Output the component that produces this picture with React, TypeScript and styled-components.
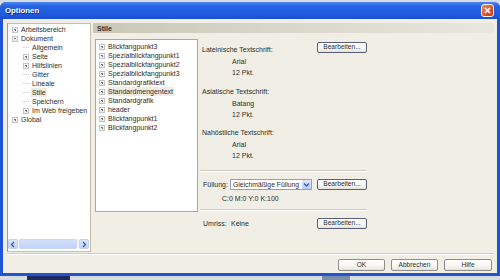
import React from "react";
import styled, { createGlobalStyle, css } from "styled-components";

const GlobalStyle = createGlobalStyle`
  html, body { margin: 0; padding: 0; }
  body {
    background: #dcdfe6;
    font-family: "Liberation Sans", Arial, sans-serif;
    font-size: 7px;
    color: #2e2e2e;
  }
`;

const Desktop = styled.div`
  width: 500px;
  height: 280px;
  display: flex;
  flex-direction: column;
  padding-top: 2px;
  box-sizing: border-box;
  background: #d8dbe2;
  overflow: hidden;
`;

const Window = styled.div`
  height: 274px;
  flex: none;
  display: flex;
  flex-direction: column;
  background: #1d55d6;
  border-radius: 6px 6px 0 0;
`;

const TitleBar = styled.div`
  height: 17px;
  flex: none;
  display: flex;
  align-items: center;
  justify-content: space-between;
  padding: 0 6px 0 5px;
  border-radius: 6px 6px 0 0;
  background: linear-gradient(#4c86f2 0%, #2562e4 25%, #1f5bdf 75%, #1a4fc9 100%);
`;

const TitleText = styled.span`
  color: #fff;
  font-weight: bold;
  font-size: 7.8px;
  text-shadow: 1px 1px 0 #10307e;
`;

const CloseButton = styled.div`
  width: 13px;
  height: 13px;
  box-sizing: border-box;
  border: 1px solid #f4f4f4;
  border-radius: 3px;
  background: linear-gradient(135deg, #f08a62 0%, #e0532a 55%, #c63d16 100%);
  display: flex;
  align-items: center;
  justify-content: center;
`;

const Body = styled.div`
  flex: 1;
  margin: 0 3px 3px;
  background: #f0eee5;
  display: flex;
  flex-direction: column;
  padding: 4px 3px 0 4px;
`;

const Main = styled.div`
  height: 229px;
  flex: none;
  display: flex;
  gap: 2px;
`;

const TreePanel = styled.div`
  width: 84px;
  flex: none;
  box-sizing: border-box;
  background: #fff;
  border: 1px solid #c4bfac;
  border-left-color: #a99a78;
  display: flex;
  flex-direction: column;
`;

const TreeList = styled.div`
  flex: 1;
  padding-top: 1px;
`;

const TreeRow = styled.div<{ $level: number }>`
  height: 9px;
  display: flex;
  align-items: center;
  gap: 2px;
  padding-left: ${(p) => 4 + p.$level * 11}px;
  white-space: nowrap;
`;

const RowLabel = styled.span<{ $selected?: boolean }>`
  line-height: 9px;
  padding: 0 1px;
  ${(p) =>
    p.$selected &&
    css`
      background: #eeece3;
    `}
`;

const Expander = styled.span<{ $open?: boolean }>`
  position: relative;
  width: 6px;
  height: 6px;
  flex: none;
  box-sizing: border-box;
  border: 1px solid #c2c6c8;
  background: linear-gradient(#ffffff, #ebe9e1);
  &::before {
    content: "";
    position: absolute;
    left: 1px;
    top: 1.5px;
    width: 2px;
    height: 1px;
    background: #6a6a6a;
  }
  &::after {
    content: "";
    position: absolute;
    left: 1.5px;
    top: 1px;
    width: 1px;
    height: 2px;
    background: #6a6a6a;
    display: ${(p) => (p.$open ? "none" : "block")};
  }
`;

const LeafStub = styled.span`
  width: 6px;
  height: 0;
  flex: none;
  border-top: 1px dotted #d0d0d0;
`;

const HScroll = styled.div`
  height: 10px;
  flex: none;
  margin: 0 1px 2px 0;
  display: flex;
  gap: 1px;
  background: #f6f6f2;
`;

const ScrollBtn = styled.div`
  width: 10px;
  flex: none;
  box-sizing: border-box;
  border: 1px solid #c3d1f1;
  border-radius: 2px;
  background: linear-gradient(#dbe5fb, #c1d2f6);
  display: flex;
  align-items: center;
  justify-content: center;
`;

const ScrollThumb = styled.div`
  flex: 1;
  box-sizing: border-box;
  border: 1px solid #c9d7f6;
  border-radius: 2px;
  background: linear-gradient(#d4e0fa, #c2d3f7);
  margin-right: 1px;
`;

const RightPane = styled.div`
  flex: 1;
  display: flex;
  flex-direction: column;
`;

const PaneHeader = styled.div`
  height: 10px;
  flex: none;
  display: flex;
  align-items: center;
  padding-left: 4px;
  font-weight: bold;
  font-size: 7px;
  background: linear-gradient(90deg, #c9c6b6 0%, #d8d6c9 45%, #e9e7de 100%);
`;

const PaneContent = styled.div`
  flex: 1;
  display: flex;
  gap: 2px;
  padding: 6px 0 0 2px;
`;

const StyleList = styled.div`
  width: 103px;
  height: 173px;
  flex: none;
  box-sizing: border-box;
  background: #fff;
  border: 1px solid #a9a9a4;
  padding-top: 2px;
`;

const ListRow = styled.div`
  height: 9px;
  display: flex;
  align-items: center;
  gap: 2px;
  padding-left: 3px;
  white-space: nowrap;
`;

const Props = styled.div`
  width: 167px;
  flex: none;
  display: flex;
  flex-direction: column;
  padding-top: 3px;
`;

const HeadRow = styled.div`
  height: 13px;
  display: flex;
  justify-content: space-between;
  align-items: flex-end;
  padding-left: 2px;
`;

const HeadLabel = styled.span`
  line-height: 11px;
`;

const FieldLabel = styled.div<{ $gap?: number }>`
  line-height: 11px;
  height: 11px;
  padding-left: 2px;
  margin-top: ${(p) => p.$gap ?? 0}px;
`;

const Values = styled.div<{ $indent: number; $gap?: number }>`
  padding-left: ${(p) => p.$indent}px;
  margin-top: ${(p) => p.$gap ?? 1}px;
  line-height: 11px;
`;

const Divider = styled.div<{ $gap: number }>`
  height: 0;
  flex: none;
  margin-top: ${(p) => p.$gap}px;
  border-top: 1px solid #cfccbd;
  border-bottom: 1px solid #ffffff;
`;

const FieldRow = styled.div<{ $gap: number }>`
  height: 11px;
  display: flex;
  align-items: center;
  margin-top: ${(p) => p.$gap}px;
  padding-left: 3px;
`;

const InlineLabel = styled.span<{ $w: number }>`
  width: ${(p) => p.$w}px;
  flex: none;
  line-height: 11px;
`;

const InlineValue = styled.span`
  margin-right: auto;
`;

const Select = styled.div`
  width: 82px;
  height: 11px;
  flex: none;
  box-sizing: border-box;
  border: 1px solid #8ea3c3;
  background: #fff;
  display: flex;
  align-items: center;
  padding-left: 2px;
  margin-right: auto;
`;

const SelectText = styled.span`
  flex: 1;
  white-space: nowrap;
  font-size: 6.8px;
`;

const SelectArrow = styled.span`
  width: 9px;
  height: 9px;
  flex: none;
  box-sizing: border-box;
  border-radius: 1px;
  background: linear-gradient(#dbe6fd, #b7cdf8);
  display: flex;
  align-items: center;
  justify-content: center;
`;

const XPButton = styled.button<{ $w: number; $h: number; $soft?: boolean; $top?: boolean }>`
  width: ${(p) => p.$w}px;
  height: ${(p) => p.$h}px;
  flex: none;
  box-sizing: border-box;
  padding: 0;
  margin: 0;
  border: 1px solid ${(p) => (p.$soft ? "#8e8e8c" : "#56627a")};
  border-radius: 2px;
  background: linear-gradient(#ffffff 0%, #f7f6f2 60%, #e6e3d8 100%);
  font-family: "Liberation Sans", Arial, sans-serif;
  font-size: 6.6px;
  color: #2e2e2e;
  line-height: 1;
  display: flex;
  align-items: center;
  justify-content: center;
  align-self: ${(p) => (p.$top ? "flex-start" : "auto")};
`;

const Footer = styled.div`
  display: flex;
  justify-content: flex-end;
  gap: 6px;
  padding: 4px 2px 0 0;
`;

const BottomStrip = styled.div`
  flex: 1;
  display: flex;
  padding-left: 27px;
  gap: 252px;
`;

const TaskBlock = styled.div<{ $w: number; $c: string }>`
  width: ${(p) => p.$w}px;
  background: ${(p) => p.$c};
`;

const Chevron = ({ dir }: { dir: "left" | "right" | "down" }) => {
  const d =
    dir === "left"
      ? "M4 1 L1.5 3.5 L4 6"
      : dir === "right"
      ? "M2 1 L4.5 3.5 L2 6"
      : "M1 2.5 L3.5 5 L6 2.5";
  return (
    <svg width="7" height="7" viewBox="0 0 7 7">
      <path d={d} fill="none" stroke="#3b5aa3" strokeWidth="1.3" />
    </svg>
  );
};

type TreeItem = { label: string; level: number; exp?: "plus" | "minus"; selected?: boolean };

const tree: TreeItem[] = [
  { label: "Arbeitsbereich", level: 0, exp: "plus" },
  { label: "Dokument", level: 0, exp: "minus" },
  { label: "Allgemein", level: 1 },
  { label: "Seite", level: 1, exp: "plus" },
  { label: "Hilfslinien", level: 1, exp: "plus" },
  { label: "Gitter", level: 1 },
  { label: "Lineale", level: 1 },
  { label: "Stile", level: 1, selected: true },
  { label: "Speichern", level: 1 },
  { label: "Im Web freigeben", level: 1, exp: "plus" },
  { label: "Global", level: 0, exp: "plus" },
];

const styles = [
  "Blickfangpunkt3",
  "Spezialblickfangpunkt1",
  "Spezialblickfangpunkt2",
  "Spezialblickfangpunkt3",
  "Standardgrafiktext",
  "Standardmengentext",
  "Standardgrafik",
  "header",
  "Blickfangpunkt1",
  "Blickfangpunkt2",
];

export default function App() {
  return (
    <>
      <GlobalStyle />
      <Desktop>
        <Window>
          <TitleBar>
            <TitleText>Optionen</TitleText>
            <CloseButton>
              <svg width="7" height="7" viewBox="0 0 7 7">
                <path d="M1 1 L6 6 M6 1 L1 6" stroke="#fff" strokeWidth="1.6" />
              </svg>
            </CloseButton>
          </TitleBar>
          <Body>
            <Main>
              <TreePanel>
                <TreeList>
                  {tree.map((t) => (
                    <TreeRow key={t.label} $level={t.level}>
                      {t.exp ? <Expander $open={t.exp === "minus"} /> : <LeafStub />}
                      <RowLabel $selected={t.selected}>{t.label}</RowLabel>
                    </TreeRow>
                  ))}
                </TreeList>
                <HScroll>
                  <ScrollBtn>
                    <Chevron dir="left" />
                  </ScrollBtn>
                  <ScrollThumb />
                  <ScrollBtn>
                    <Chevron dir="right" />
                  </ScrollBtn>
                </HScroll>
              </TreePanel>
              <RightPane>
                <PaneHeader>Stile</PaneHeader>
                <PaneContent>
                  <StyleList>
                    {styles.map((s) => (
                      <ListRow key={s}>
                        <Expander />
                        <RowLabel $selected={s === "Standardmengentext"}>{s}</RowLabel>
                      </ListRow>
                    ))}
                  </StyleList>
                  <Props>
                    <HeadRow>
                      <HeadLabel>Lateinische Textschrift:</HeadLabel>
                      <XPButton $w={50} $h={11} $top>
                        Bearbeiten...
                      </XPButton>
                    </HeadRow>
                    <Values $indent={32}>
                      <div>Arial</div>
                      <div>12 Pkt.</div>
                    </Values>
                    <FieldLabel $gap={8}>Asiatische Textschrift:</FieldLabel>
                    <Values $indent={32}>
                      <div>Batang</div>
                      <div>12 Pkt.</div>
                    </Values>
                    <FieldLabel $gap={7}>Nahöstliche Textschrift:</FieldLabel>
                    <Values $indent={32}>
                      <div>Arial</div>
                      <div>12 Pkt.</div>
                    </Values>
                    <Divider $gap={9} />
                    <FieldRow $gap={7}>
                      <InlineLabel $w={27}>Füllung:</InlineLabel>
                      <Select>
                        <SelectText>Gleichmäßige Füllung</SelectText>
                        <SelectArrow>
                          <Chevron dir="down" />
                        </SelectArrow>
                      </Select>
                      <XPButton $w={50} $h={11}>
                        Bearbeiten...
                      </XPButton>
                    </FieldRow>
                    <Values $indent={22} $gap={3}>
                      C:0 M:0 Y:0 K:100
                    </Values>
                    <Divider $gap={5} />
                    <FieldRow $gap={7}>
                      <InlineLabel $w={28}>Umriss:</InlineLabel>
                      <InlineValue>Keine</InlineValue>
                      <XPButton $w={50} $h={11}>
                        Bearbeiten...
                      </XPButton>
                    </FieldRow>
                  </Props>
                </PaneContent>
              </RightPane>
            </Main>
            <Divider $gap={1} />
            <Footer>
              <XPButton $w={47} $h={12} $soft>OK</XPButton>
              <XPButton $w={47} $h={12} $soft>Abbrechen</XPButton>
              <XPButton $w={48} $h={12} $soft>Hilfe</XPButton>
            </Footer>
          </Body>
        </Window>
        <BottomStrip>
          <TaskBlock $w={43} $c="#1f2a5c" />
          <TaskBlock $w={28} $c="#7d8aa8" />
        </BottomStrip>
      </Desktop>
    </>
  );
}
